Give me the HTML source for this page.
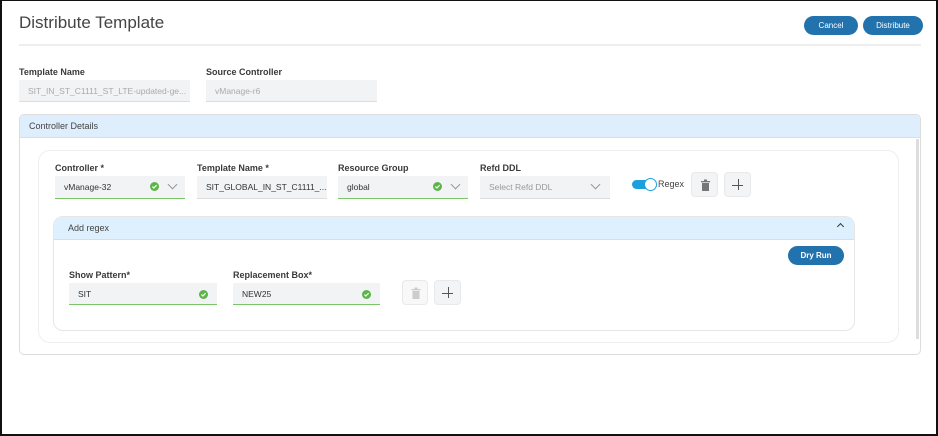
<!DOCTYPE html>
<html><head><meta charset="utf-8"><style>
*{box-sizing:border-box;margin:0;padding:0}
body{width:938px;height:436px;overflow:hidden;background:#fff;font-family:"Liberation Sans",sans-serif;position:relative}
.frame{position:absolute;left:0;top:0;width:938px;height:436px;border:2px solid #111;border-top:1px solid #111}
.a{position:absolute}
.lbl{position:absolute;font-size:9px;font-weight:bold;color:#3a3a3a}
.inp{position:absolute;background:#f2f3f5;font-size:8.5px;color:#333;padding-left:9px;display:flex;align-items:center}
.g{border-bottom:1px solid #7cc46a}
.gr{border-bottom:1px solid #ddd}
.btn{position:absolute;background:#2272ad;color:#fff;font-size:8px;border-radius:10px;display:flex;align-items:center;justify-content:center}
.chk{position:absolute;width:9px;height:9px}
.chev{position:absolute;width:7px;height:7px;border-right:1px solid #999;border-bottom:1px solid #999;transform:rotate(45deg)}
.ib{position:absolute;background:#f3f4f6;border-radius:4px;border:1px solid #e8e9eb}
.plus:before,.plus:after{content:"";position:absolute;background:#555;left:50%;top:50%}
.plus:before{width:11px;height:1px;margin-left:-5.5px}
.plus:after{width:1px;height:11px;margin-top:-5.5px}
</style></head><body>
<div class="a" style="left:19px;top:13px;font-size:17px;color:#444">Distribute Template</div>
<div class="btn" style="left:804px;top:16px;width:54px;height:19px">Cancel</div>
<div class="btn" style="left:863px;top:16px;width:60px;height:19px">Distribute</div>
<div class="a" style="left:19px;top:44px;width:902px;height:2px;background:#eee"></div>

<div class="lbl" style="left:19px;top:67px">Template Name</div>
<div class="inp gr" style="left:19px;top:80px;width:171px;height:22px;color:#aaa">SIT_IN_ST_C1111_ST_LTE-updated-ge...</div>
<div class="lbl" style="left:206px;top:67px">Source Controller</div>
<div class="inp gr" style="left:206px;top:80px;width:171px;height:22px;color:#aaa">vManage-r6</div>

<div class="a" style="left:19px;top:114px;width:902px;height:241px;border:1px solid #ddd;border-radius:5px;overflow:hidden">
 <div style="height:23px;background:#deeefc;border-bottom:1px solid #cfe0ef;font-size:9px;color:#444;padding:6px 0 0 9px">Controller Details</div>
 <div class="a" style="right:1px;top:24px;width:3px;height:200px;background:#ddd"></div>
</div>
<div class="a" style="left:38px;top:150px;width:861px;height:193px;border:1px solid #eee;border-radius:12px"></div>

<div class="lbl" style="left:55px;top:163px">Controller *</div>
<div class="inp g" style="left:55px;top:176px;width:130px;height:23px">vManage-32</div>
<svg class="chk" style="left:150px;top:182px" viewBox="0 0 9 9"><circle cx="4.5" cy="4.5" r="4.5" fill="#5bb548"/><path d="M2.4 4.6 L3.9 6 L6.6 3.2" stroke="#fff" stroke-width="1.2" fill="none"/></svg><div class="chev" style="left:169px;top:181px"></div>
<div class="lbl" style="left:197px;top:163px">Template Name *</div>
<div class="inp gr" style="left:197px;top:176px;width:130px;height:23px">SIT_GLOBAL_IN_ST_C1111_...</div>
<div class="lbl" style="left:338px;top:163px">Resource Group</div>
<div class="inp g" style="left:338px;top:176px;width:130px;height:23px">global</div>
<svg class="chk" style="left:433px;top:182px" viewBox="0 0 9 9"><circle cx="4.5" cy="4.5" r="4.5" fill="#5bb548"/><path d="M2.4 4.6 L3.9 6 L6.6 3.2" stroke="#fff" stroke-width="1.2" fill="none"/></svg><div class="chev" style="left:452px;top:181px"></div>
<div class="lbl" style="left:480px;top:163px">Refd DDL</div>
<div class="inp gr" style="left:480px;top:176px;width:130px;height:23px;color:#999">Select Refd DDL</div>
<div class="chev" style="left:592px;top:181px"></div>

<div class="a" style="left:632px;top:180px;width:20px;height:9px;border-radius:5px;background:#1ca0dd"></div>
<div class="a" style="left:644px;top:178px;width:13px;height:13px;border-radius:50%;background:#fff;border:1px solid #1ca0dd"></div>
<div class="a" style="left:658px;top:179px;font-size:9px;color:#444">Regex</div>
<div class="ib" style="left:691px;top:172px;width:27px;height:25px"><svg width="27" height="25" viewBox="0 0 27 25"><rect x="9" y="8" width="9" height="1.3" fill="#777"/><rect x="12" y="6.5" width="3" height="1.5" fill="#777"/><rect x="10" y="10" width="7" height="8" fill="#777"/></svg></div>
<div class="ib plus" style="left:724px;top:172px;width:27px;height:25px"></div>

<div class="a" style="left:53px;top:216px;width:802px;height:115px;border:1px solid #e6e6e6;border-radius:10px;overflow:hidden">
 <div style="height:23px;background:#def0fd;border-bottom:1px solid #cfe0ef;font-size:9px;color:#444;padding:6px 0 0 14px">Add regex</div>
</div>
<div class="a" style="left:838px;top:224px;width:5px;height:5px;border-left:1.5px solid #333;border-top:1.5px solid #333;transform:rotate(45deg)"></div>
<div class="btn" style="left:788px;top:246px;width:56px;height:19px;font-weight:bold">Dry Run</div>

<div class="lbl" style="left:69px;top:270px">Show Pattern*</div>
<div class="inp g" style="left:69px;top:283px;width:148px;height:22px">SIT</div>
<svg class="chk" style="left:199px;top:290px" viewBox="0 0 9 9"><circle cx="4.5" cy="4.5" r="4.5" fill="#5bb548"/><path d="M2.4 4.6 L3.9 6 L6.6 3.2" stroke="#fff" stroke-width="1.2" fill="none"/></svg>
<div class="lbl" style="left:233px;top:270px">Replacement Box*</div>
<div class="inp g" style="left:233px;top:283px;width:147px;height:22px">NEW25</div>
<svg class="chk" style="left:362px;top:290px" viewBox="0 0 9 9"><circle cx="4.5" cy="4.5" r="4.5" fill="#5bb548"/><path d="M2.4 4.6 L3.9 6 L6.6 3.2" stroke="#fff" stroke-width="1.2" fill="none"/></svg>
<div class="ib" style="left:402px;top:280px;width:26px;height:25px;background:#f8f8f9"><svg width="26" height="25" viewBox="0 0 26 25"><rect x="8.5" y="8" width="9" height="1.3" fill="#ccc"/><rect x="11.5" y="6.5" width="3" height="1.5" fill="#ccc"/><rect x="9.5" y="10" width="7" height="8" fill="#ccc"/></svg></div>
<div class="ib plus" style="left:434px;top:280px;width:27px;height:25px"></div>

<div class="frame"></div>
</body></html>
